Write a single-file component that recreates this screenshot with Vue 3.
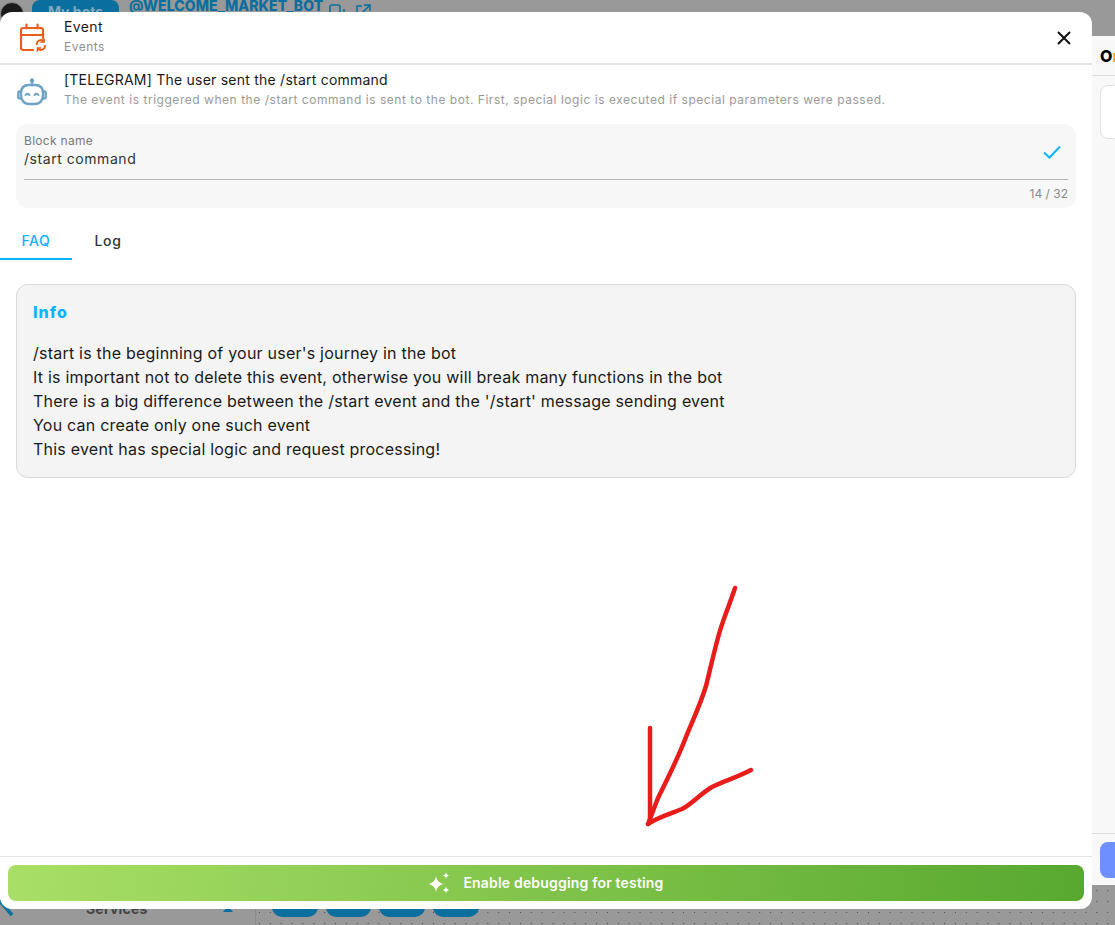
<script setup>
const lines = [
  "/start is the beginning of your user's journey in the bot",
  'It is important not to delete this event, otherwise you will break many functions in the bot',
  "There is a big difference between the /start event and the '/start' message sending event",
  'You can create only one such event',
  'This event has special logic and request processing!'
]
const chips = [0, 1, 2, 3]
</script>

<template>
  <div class="page">
    <div class="under">
      <header class="topbar">
        <span class="avatar"></span>
        <span class="mybots">My bots</span>
        <span class="botname">@WELCOME_MARKET_BOT</span>
        <svg class="topicon first" viewBox="0 0 16 16" fill="none" stroke="#0a6e9e" stroke-width="1.6"><rect x="1" y="1" width="10" height="10" rx="2"/><path d="M5 14h8a2 2 0 0 0 2-2V5"/></svg>
        <svg class="topicon" viewBox="0 0 16 16" fill="none" stroke="#0a6e9e" stroke-width="1.6"><path d="M7 2H2v12h12V9M9 1h6v6M15 1 7 9"/></svg>
      </header>
      <div class="workspace">
        <aside class="left">
          <svg class="search" viewBox="0 0 14 20" fill="none" stroke="#0a6e9e" stroke-width="3.500"><path d="M-1 0 12 15"/></svg>
          <span class="services">Services</span>
          <span class="caret"></span>
        </aside>
        <main class="canvas">
          <div class="chips"><span v-for="c in chips" :key="c" class="chip"></span></div>
        </main>
      </div>
      <aside class="side">
        <div class="side-title">O<span class="orange">n</span></div>
        <div class="side-card"></div>
        <div class="side-foot"><span class="side-btn"></span></div>
      </aside>
    </div>

    <section class="modal">
      <div class="head">
        <svg class="head-icon" viewBox="0 0 26 29" fill="none" stroke="#ea5e1c" stroke-width="2.200" stroke-linecap="round" stroke-linejoin="round">
          <path d="M13 27H3a2 2 0 0 1-2-2V7a2 2 0 0 1 2-2h18a2 2 0 0 1 2 2v8"/>
          <path d="M1 12h22M6.500 1.500v4M17.500 1.500v4"/>
          <path d="M16.800 21a4.200 4.200 0 0 1 7-2.800M25 23a4.200 4.200 0 0 1-7 2.800" stroke-width="2"/>
          <path d="M24 16v3h-3M17.500 28v-3h3" stroke-width="1.700"/>
        </svg>
        <div class="head-text">
          <div class="title">Event</div>
          <div class="sub">Events</div>
        </div>
        <svg class="close" viewBox="0 0 16 16" fill="none" stroke="#111" stroke-width="2"><path d="M2 2l12 12M14 2 2 14"/></svg>
      </div>

      <div class="body">
        <div class="trigger">
          <svg class="bot-icon" viewBox="0 0 30 28" fill="none" stroke="#6ea3c8" stroke-width="2.400" stroke-linecap="round" stroke-linejoin="round">
            <circle cx="15" cy="2.500" r="2.200" fill="#6ea3c8" stroke="none"/>
            <path d="M15 4v3"/>
            <path d="M12 7h6c5 0 8 3 8 8v2c0 5-3 9-8 9h-6c-5 0-8-4-8-9v-2c0-5 3-8 8-8Z"/>
            <path d="M4 13.500H2.500a1.200 1.200 0 0 0-1.200 1.200v4.600a1.200 1.200 0 0 0 1.200 1.200H4M26 13.500h1.500a1.200 1.200 0 0 1 1.200 1.200v4.600a1.200 1.200 0 0 1-1.200 1.200H26"/>
            <path d="M8.500 17c1-1.800 3-1.800 4 0M17.500 17c1-1.800 3-1.800 4 0" stroke-width="2"/>
          </svg>
          <div class="trigger-text">
            <div class="trigger-title">[TELEGRAM] The user sent the /start command</div>
            <div class="trigger-desc">The event is triggered when the /start command is sent to the bot. First, special logic is executed if special parameters were passed.</div>
          </div>
        </div>

        <div class="field">
          <div class="field-main">
            <div class="field-text">
              <div class="field-label">Block name</div>
              <div class="field-value">/start command</div>
            </div>
            <svg class="check" viewBox="0 0 18 14" fill="none" stroke="#0cb4ff" stroke-width="2"><path d="M1 7.500 6.500 12.500 17 1.500"/></svg>
          </div>
          <div class="counter">14 / 32</div>
        </div>

        <nav class="tabs">
          <span class="tab active">FAQ</span>
          <span class="tab">Log</span>
        </nav>

        <div class="info">
          <div class="info-title">Info</div>
          <div class="info-lines">
            <div v-for="l in lines" :key="l">{{ l }}</div>
          </div>
        </div>

        <svg class="scribble" viewBox="0 0 140 260" fill="none" stroke="#e91c1c" stroke-width="4.500" stroke-linecap="round" stroke-linejoin="round">
          <path d="M105 12C99 30 93 44 89 58C84 76 80 94 76 110C70 130 60 150 54 166C46 186 36 206 28 222L18 248"/>
          <path d="M20 152V244"/>
          <path d="M18 248C28 241 40 238 52 233C62 228 70 218 82 211C94 205 108 201 121 194"/>
        </svg>
      </div>

      <div class="foot">
        <button class="debug" type="button">
          <svg class="sparks" viewBox="0 0 24 24" fill="#fff"><path d="M8 5C8.800 9.500 10.500 11.500 15.500 13 10.500 14.500 8.800 16.500 8 21 7.200 16.500 5.500 14.500 .5 13 5.500 11.500 7.200 9.500 8 5Z"/><path d="M18 1.200c.4 2 1.200 2.900 3.400 3.400-2.200.5-3 1.400-3.400 3.400-.4-2-1.200-2.900-3.400-3.400 2.200-.5 3-1.400 3.400-3.400ZM18 15.600c.4 2 1.200 2.900 3.400 3.400-2.200.5-3 1.400-3.400 3.400-.4-2-1.200-2.900-3.400-3.400 2.200-.5 3-1.400 3.400-3.400Z"/></svg>
          <span class="debug-label">Enable debugging for testing</span>
        </button>
      </div>
    </section>
  </div>
</template>

<style scoped>
.page {
  position: relative;
  width: 1115px;
  height: 925px;
  overflow: hidden;
  font-family: Inter, "Noto Sans", sans-serif;
  color: #1a1a1a;
}
.under {
  position: absolute;
  inset: 0;
  background: #999;
  display: flex;
  flex-direction: column;
}
.topbar {
  display: flex;
  align-items: flex-start;
  height: 36px;
  flex: none;
}
.avatar { width: 24px; height: 24px; margin-top: 2px; border-radius: 50%; background: #1b1b1b; border: 1px solid #888; box-sizing: border-box; }
.mybots { width: 87px; height: 30px; margin-left: 8px; background: #0a6e9e; border-radius: 8px; text-align: center; font-size: 14px; line-height: 24px; font-weight: 700; color: #7fa8bf; }
.botname { margin-left: 10px; margin-top: -3px; font-size: 14px; font-weight: 800; letter-spacing: 0.1px; color: #0a6e9e; line-height: 18px; white-space: nowrap; }
.topicon { width: 16px; height: 16px; margin-left: 10px; margin-top: 4px; }
.topicon.first { margin-left: 6px; }
.workspace { flex: 1; display: flex; min-height: 0; }
.left { width: 255px; flex: none; position: relative; border-right: 1px solid #8a8a8a; box-sizing: content-box; }
.canvas {
  flex: 1;
  position: relative;
  background-image: radial-gradient(circle, #4a4a4a 0.6px, transparent 1px);
  background-size: 10.88px 10.88px;
  background-position: -2px 1px;
}
.search { position: absolute; left: 0; bottom: 5px; width: 14px; height: 20px; }
.services { position: absolute; left: 86px; bottom: 8px; font-size: 14px; font-weight: 700; letter-spacing: 0.2px; color: #444; line-height: 16px; }
.caret { position: absolute; left: 223px; bottom: 13px; width: 0; height: 0; border-left: 5px solid transparent; border-right: 5px solid transparent; border-bottom: 6px solid #0a6e9e; }
.chips { position: absolute; left: 16px; bottom: 8px; display: flex; gap: 8.200px; }
.chip { width: 45.500px; height: 32px; background: #0a6e9e; border-radius: 10px; }
.side {
  position: absolute;
  right: 0;
  top: 36px;
  width: 23px;
  height: 849px;
  background: #f8f8f8;
  display: flex;
  flex-direction: column;
}
.side-title { height: 40px; padding: 10px 0 0 8px; box-sizing: border-box; border-bottom: 1px solid #ddd; font-size: 16px; font-weight: 800; color: #000; overflow: hidden; white-space: nowrap; }
.orange { color: #f5a020; }
.side-card { width: 40px; height: 52px; margin: 9px 0 0 8px; border: 1px solid #e2e2e2; border-radius: 8px; background: #fff; }
.side-foot { margin-top: auto; height: 52px; border-top: 1px solid #ddd; padding: 8px 0 0 8px; box-sizing: border-box; }
.side-btn { display: block; width: 40px; height: 36px; background: #6e8fff; border-radius: 8px; }

.modal {
  position: absolute;
  left: 0;
  top: 12px;
  width: 1092px;
  height: 897px;
  background: #fff;
  border-radius: 12px;
  display: flex;
  flex-direction: column;
  overflow: hidden;
}
.head {
  height: 53px;
  flex: none;
  box-sizing: border-box;
  border-bottom: 2px solid #e2e2e2;
  display: flex;
  align-items: center;
  padding: 0 20px;
}
.head-icon { width: 26px; height: 29px; flex: none; }
.head-text { margin-left: 18px; flex: 1; margin-top: -1px; }
.title { font-size: 14px; line-height: 18px; letter-spacing: 0.4px; }
.sub { font-size: 12px; line-height: 18px; margin-top: 2px; color: #8f8f8f; letter-spacing: 0.5px; }
.close { width: 16px; height: 16px; flex: none; }

.body {
  flex: 1;
  position: relative;
  padding: 0 16px;
}
.trigger { display: flex; align-items: flex-start; height: 59px; padding-top: 6px; box-sizing: border-box; }
.bot-icon { width: 30px; height: 28px; flex: none; margin: 7px 0 0 1px; }
.trigger-text { margin-left: 17px; }
.trigger-title { font-size: 14px; line-height: 18px; letter-spacing: 0.23px; }
.trigger-desc { font-size: 12px; line-height: 18px; margin-top: 2px; color: #9a9a9a; letter-spacing: 0.535px; white-space: nowrap; }

.field {
  background: #f7f7f7;
  border-radius: 12px;
  height: 84px;
  padding: 0 8px;
  box-sizing: border-box;
}
.field-main {
  height: 56px;
  border-bottom: 1px solid #b5b5b5;
  display: flex;
  align-items: center;
  box-sizing: border-box;
}
.field-text { flex: 1; margin-top: -1px; }
.field-label { font-size: 12px; line-height: 15px; color: #7a7a7a; letter-spacing: 0.3px; }
.field-value { font-size: 14px; line-height: 20px; color: #333; letter-spacing: 0.55px; margin-top: 1px; }
.check { width: 18px; height: 14px; margin-right: 7px; }
.counter { text-align: right; font-size: 12px; line-height: 15px; margin-top: 6px; color: #8a8a8a; }

.tabs { display: flex; margin: 16px 0 0 -16px; height: 36px; }
.tab { width: 72px; text-align: center; font-size: 14px; font-weight: 500; line-height: 34px; color: #333; box-sizing: border-box; letter-spacing: 0.6px; }
.tab.active { color: #0cb4ff; border-bottom: 2px solid #0cb4ff; }

.info {
  margin-top: 24px;
  height: 194px;
  box-sizing: border-box;
  background: #f4f4f4;
  border: 1px solid #d8d8d8;
  border-radius: 12px;
  padding: 15px 16px;
}
.info-title { font-size: 16px; line-height: 24px; font-weight: 800; color: #0cb4ff; letter-spacing: 1px; }
.info-lines { margin-top: 17px; font-size: 16px; line-height: 24px; color: #1a1a1a; letter-spacing: 0.22px; }

.scribble {
  position: absolute;
  left: 630px;
  top: 511px;
  width: 140px;
  height: 260px;
}
.foot {
  flex: none;
  height: 53px;
  border-top: 1px solid #e2e2e2;
  box-sizing: border-box;
  padding: 8px;
}
.debug {
  width: 100%;
  height: 36px;
  border: 0;
  border-radius: 8px;
  background: linear-gradient(96deg, #a9df66 0%, #58a82f 100%);
  color: #fff;
  font-family: inherit;
  font-size: 14px;
  font-weight: 600;
  letter-spacing: 0.18px;
  display: flex;
  align-items: center;
  justify-content: center;
  gap: 11px;
  padding: 0;
}
.debug-label { margin-bottom: 1px; }
.sparks { width: 24px; height: 24px; }
</style>
